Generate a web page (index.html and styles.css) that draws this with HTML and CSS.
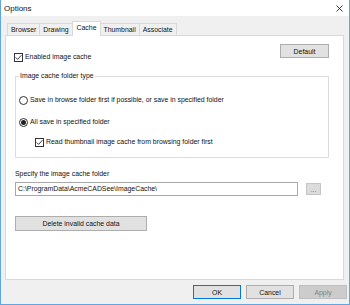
FILE: index.html
```html
<!DOCTYPE html>
<html>
<head>
<meta charset="utf-8">
<link rel="stylesheet" href="styles.css">
</head>
<body>
<div class="window">
  <div class="titlebar">
    <span class="title">Options</span>
    <svg class="close" width="7" height="7" viewBox="0 0 7 7"><path d="M0.5 0.5 L6.5 6.5 M6.5 0.5 L0.5 6.5" stroke="#222" stroke-width="0.9" fill="none"/></svg>
  </div>
  <div class="main">
    <div class="tabs">
      <div class="tab">Browser</div>
      <div class="tab">Drawing</div>
      <div class="tab active">Cache</div>
      <div class="tab">Thumbnail</div>
      <div class="tab">Associate</div>
    </div>
    <div class="panel">
      <div class="toprow">
        <label class="opt first">
          <span class="check"><svg width="7" height="7" viewBox="0 0 7 7"><path d="M0.6 3.4 L2.6 5.4 L6.4 1.2" stroke="#222" stroke-width="0.9" fill="none"/></svg></span>
          <span>Enabled image cache</span>
        </label>
        <div class="btn default">Default</div>
      </div>
      <div class="group">
        <span class="group-title">Image cache folder type</span>
        <label class="opt r1">
          <span class="radio"></span>
          <span>Save in browse folder first if possible, or save in specified folder</span>
        </label>
        <label class="opt r2">
          <span class="radio on"><span class="dot"></span></span>
          <span>All save in specified folder</span>
        </label>
        <label class="opt sub">
          <span class="check"><svg width="7" height="7" viewBox="0 0 7 7"><path d="M0.6 3.4 L2.6 5.4 L6.4 1.2" stroke="#222" stroke-width="0.9" fill="none"/></svg></span>
          <span>Read thumbnail image cache from browsing folder first</span>
        </label>
      </div>
      <div class="field-label">Specify the image cache folder</div>
      <div class="pathrow">
        <div class="input">C:\ProgramData\AcmeCADSee\ImageCache\</div>
        <div class="btn browse">...</div>
      </div>
      <div class="btn delete">Delete invalid cache data</div>
    </div>
    <div class="footer">
      <div class="btn ok">OK</div>
      <div class="btn">Cancel</div>
      <div class="btn disabled">Apply</div>
    </div>
  </div>
</div>
</body>
</html>
```

FILE: styles.css
```css
html, body {
  margin: 0;
  padding: 0;
}
body {
  width: 350px;
  height: 305px;
  overflow: hidden;
}
.window {
  width: 350px;
  height: 305px;
  box-sizing: border-box;
  border: 1px solid #5fa6e2;
  border-top: 0;
  background: #f0f0f0;
  display: flex;
  flex-direction: column;
  font-family: "Liberation Sans", Arial, sans-serif;
  font-size: 6.9px;
  color: #111;
}
.titlebar {
  height: 16px;
  flex: none;
  background: #fff;
  display: flex;
  align-items: center;
  justify-content: space-between;
  padding: 0 6px 0 3px;
}
.title {
  font-size: 8px;
  margin-top: 1px;
}
.main {
  padding: 5px 5px 0 4px;
  display: flex;
  flex-direction: column;
}
.tabs {
  display: flex;
  align-items: flex-end;
  height: 14px;
  padding-left: 2px;
}
.tab {
  height: 12px;
  box-sizing: border-box;
  border: 1px solid #d9d9d9;
  border-bottom: 0;
  border-left: 0;
  padding: 0 3px;
  line-height: 11px;
  background: #f0f0f0;
}
.tab:first-child {
  border-left: 1px solid #d9d9d9;
}
.tab.active {
  height: 15px;
  background: #fff;
  border-left: 1px solid #d9d9d9;
  margin-left: -1px;
  margin-right: -1px;
  padding: 0 4px;
  line-height: 12px;
  position: relative;
  top: 1px;
  z-index: 1;
}
.panel {
  height: 245px;
  box-sizing: border-box;
  background: #fff;
  border: 1px solid #d9d9d9;
  padding: 8px 14px 0 9px;
  display: flex;
  flex-direction: column;
}
.toprow {
  display: flex;
  justify-content: space-between;
  align-items: flex-start;
}
.opt {
  display: flex;
  align-items: center;
  gap: 2px;
  height: 10px;
  line-height: 10px;
  white-space: nowrap;
}
.opt.first {
  margin-top: 8px;
  margin-left: -1px;
}
.check {
  width: 9px;
  height: 9px;
  box-sizing: border-box;
  border: 1px solid #333;
  display: flex;
  align-items: center;
  justify-content: center;
  flex: none;
  background: #fff;
}
.radio {
  width: 9px;
  height: 9px;
  box-sizing: border-box;
  border: 1px solid #333;
  border-radius: 50%;
  display: flex;
  align-items: center;
  justify-content: center;
  flex: none;
  background: #fff;
}
.dot {
  width: 5px;
  height: 5px;
  border-radius: 50%;
  background: #222;
}
.btn {
  height: 14px;
  box-sizing: border-box;
  background: #e1e1e1;
  border: 1px solid #adadad;
  display: flex;
  align-items: center;
  justify-content: center;
  white-space: nowrap;
}
.default {
  width: 49px;
}
.group {
  margin-top: 14px;
  border: 1px solid #dcdcdc;
  padding: 0 0 10px 3px;
  display: flex;
  flex-direction: column;
}
.group-title {
  display: block;
  width: fit-content;
  height: 8px;
  line-height: 8px;
  margin-top: -5px;
  padding: 0 1px;
  background: #fff;
}
.opt.r1 {
  margin-top: 15px;
}
.opt.r2 {
  margin-top: 12px;
}
.opt.sub {
  margin-top: 10px;
  margin-left: 16px;
}
.field-label {
  margin-top: 12px;
  height: 8px;
  line-height: 8px;
}
.pathrow {
  margin-top: 4px;
  display: flex;
  align-items: center;
  gap: 8px;
}
.input {
  width: 283px;
  height: 14px;
  box-sizing: border-box;
  border: 1px solid #a8a8a8;
  background: #fff;
  padding-left: 2px;
  line-height: 12px;
  white-space: nowrap;
}
.browse {
  width: 15px;
  height: 12px;
  align-items: flex-end;
  line-height: 8px;
  color: #666;
  background: #dcdcdc;
  border-color: #c4c4c4;
}
.delete {
  margin-top: 20px;
  width: 132px;
  height: 15px;
}
.footer {
  display: flex;
  justify-content: flex-end;
  gap: 5px;
  padding-top: 5px;
  margin-right: -3px;
}
.footer .btn {
  width: 48px;
}
.ok {
  border-color: #0078d7 !important;
}
.disabled {
  background: #cccccc;
  border-color: #bfbfbf;
  color: #838383;
}
```
